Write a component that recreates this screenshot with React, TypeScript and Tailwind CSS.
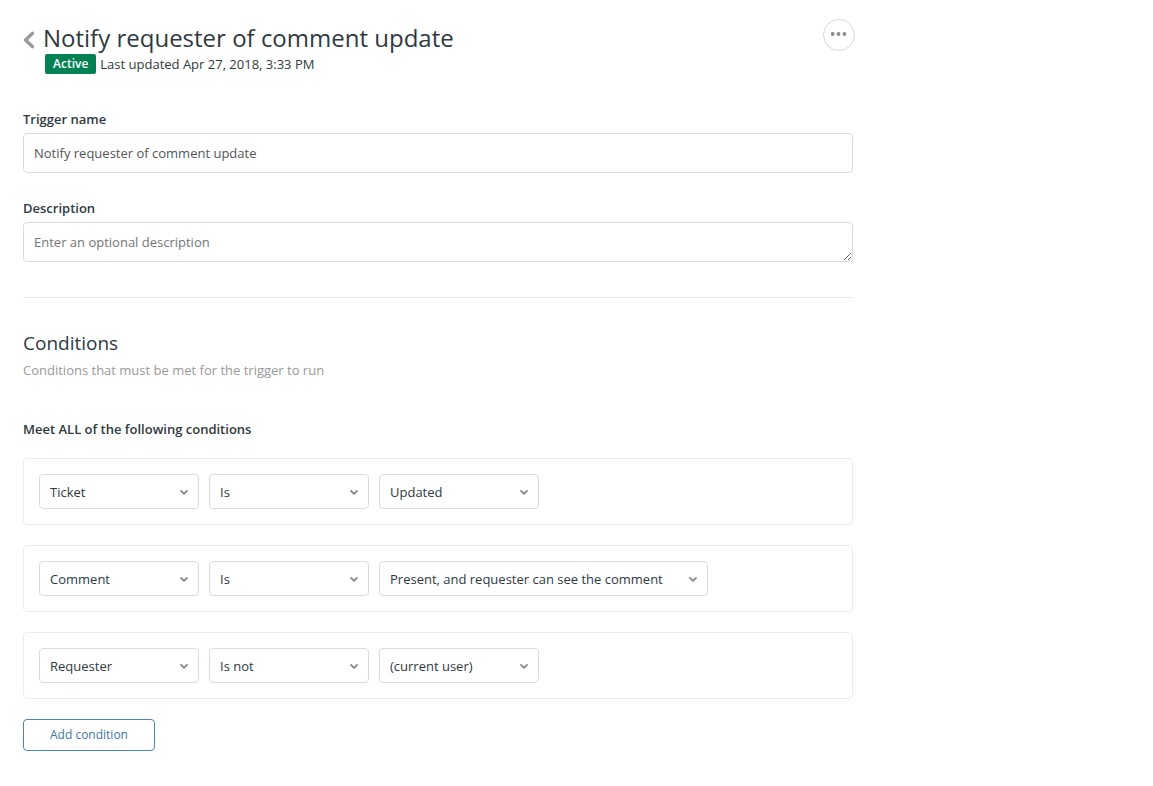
import { useState } from "react";

type Condition = {
  field: string;
  operator: string;
  value: string;
  wide?: boolean;
};

const initialConditions: Condition[] = [
  { field: "Ticket", operator: "Is", value: "Updated" },
  {
    field: "Comment",
    operator: "Is",
    value: "Present, and requester can see the comment",
    wide: true,
  },
  { field: "Requester", operator: "Is not", value: "(current user)" },
];

function Select({
  label,
  value,
  wide,
}: {
  label: string;
  value: string;
  wide?: boolean;
}) {
  return (
    <div className={wide ? "relative w-[329px]" : "relative w-40"}>
      <select
        aria-label={label}
        defaultValue={value}
        className="block h-[35px] w-full appearance-none rounded-[4px] border border-[#d8dcde] bg-white pr-8 pl-[10px] text-[13px] text-[#2f3941]"
      >
        <option>{value}</option>
      </select>
      <svg
        viewBox="0 0 10 6"
        className="pointer-events-none absolute top-[15px] right-[10px] h-[6px] w-[10px]"
        fill="none"
        stroke="#87898c"
        strokeWidth="1.8"
        strokeLinecap="round"
        strokeLinejoin="round"
      >
        <path d="M2 1.9 5 4.9 8 1.9" />
      </svg>
    </div>
  );
}

export default function App() {
  const [conditions, setConditions] = useState(initialConditions);

  const addCondition = () =>
    setConditions((c) => [
      ...c,
      { field: "Ticket", operator: "Is", value: "Updated" },
    ]);

  return (
    <main className="min-h-screen bg-white px-[23px] pt-[19px] pb-8 font-['Open_Sans','Noto_Sans',sans-serif] text-[13px] leading-5 text-[#2f3941]">
      <div className="w-full max-w-[830px]">
        {/* Header */}
        <header className="-mr-[2px] flex items-start justify-between">
          <div className="flex">
            <a
              href="#triggers"
              aria-label="Back to triggers"
              className="mt-3 mr-2"
            >
              <svg
                viewBox="0 0 12 18"
                className="h-[18px] w-3"
                fill="none"
                stroke="#999999"
                strokeWidth="3.4"
                strokeLinecap="round"
                strokeLinejoin="round"
              >
                <path d="M9.4 2.4 2.6 9l6.8 6.6" />
              </svg>
            </a>
            <div>
              <h1 className="pt-[2px] text-[24px] leading-[33px]">
                Notify requester of comment update
              </h1>
              <div className="flex items-center gap-1 pl-[2px]">
                <span className="rounded-[2px] bg-[#038153] px-2 text-[12px] leading-5 font-semibold text-white">
                  Active
                </span>
                <span>Last updated Apr 27, 2018, 3:33 PM</span>
              </div>
            </div>
          </div>
          <button
            aria-label="More actions"
            className="flex h-8 w-8 justify-center rounded-full border border-[#d8d8d8] pt-3"
          >
            <svg viewBox="0 0 16 4" className="h-1 w-4" fill="#8c8c8c">
              <circle cx="1.6" cy="2" r="1.9" />
              <circle cx="7.5" cy="2" r="1.9" />
              <circle cx="13.4" cy="2" r="1.9" />
            </svg>
          </button>
        </header>

        {/* Details */}
        <div className="mt-[35px]">
          <label htmlFor="trigger-name" className="block font-semibold">
            Trigger name
          </label>
          <input
            id="trigger-name"
            type="text"
            defaultValue="Notify requester of comment update"
            className="mt-1 block h-10 w-full rounded-[4px] border border-[#d8dcde] px-[10px] text-[#555555]"
          />
        </div>
        <div className="mt-[25px]">
          <label htmlFor="description" className="block font-semibold">
            Description
          </label>
          <textarea
            id="description"
            rows={1}
            placeholder="Enter an optional description"
            className="mt-1 block h-10 w-full resize rounded-[4px] border border-[#d8dcde] px-[10px] py-[9px] placeholder:text-[#757575]"
          />
        </div>

        <hr className="mt-[35px] border-[#ebeced]" />

        {/* Conditions */}
        <section>
          <h2 className="mt-[31px] text-[19px] leading-7">Conditions</h2>
          <p className="mt-[3px] text-[#999999]">
            Conditions that must be met for the trigger to run
          </p>
          <h3 className="mt-[39px] font-semibold">
            Meet ALL of the following conditions
          </h3>

          <div className="mt-[19px] flex flex-col gap-5">
            {conditions.map((c, i) => (
              <div
                key={i}
                className="flex flex-wrap gap-[10px] rounded-[4px] border border-[#ebeced] p-[15px]"
              >
                <Select label="Condition" value={c.field} />
                <Select label="Operator" value={c.operator} />
                <Select label="Value" value={c.value} wide={c.wide} />
              </div>
            ))}
          </div>

          <button
            onClick={addCondition}
            className="mt-5 h-8 rounded-[4px] border border-[#4a86b4] px-[26px] text-[12px] text-[#3c78a8]"
          >
            Add condition
          </button>
        </section>
      </div>
    </main>
  );
}
